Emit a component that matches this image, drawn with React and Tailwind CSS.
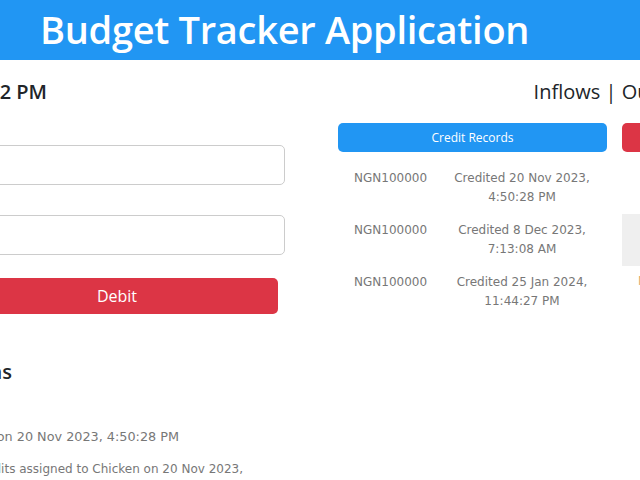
const credits = [
  { amount: 'NGN100000', date: 'Credited 20 Nov 2023, 4:50:28 PM' },
  { amount: 'NGN100000', date: 'Credited 8 Dec 2023, 7:13:08 AM' },
  { amount: 'NGN100000', date: 'Credited 25 Jan 2024, 11:44:27 PM' },
];

const debits = [
  { amount: '', date: '' },
  { amount: '', date: '', shaded: true },
  { amount: 'NGN5000', date: 'Debited 21 Nov 2023' },
];

function RecordRow({ amount, date, shaded, tone }) {
  return (
    <div
      className={`flex justify-between h-[52px] pl-[16px] py-[6px] text-[12px] leading-[19px] ${shaded ? 'bg-[#efefef]' : ''}`}
      style={{ fontFamily: '"DejaVu Sans", Verdana, sans-serif' }}
    >
      <span className={tone}>{amount}</span>
      <span className={`w-[170px] text-center ${tone}`}>{date}</span>
    </div>
  );
}

export default function App() {
  return (
    <div
      className="w-[640px] h-[480px] overflow-hidden bg-white text-[#212529]"
      style={{ fontFamily: '"Open Sans", "Noto Sans", sans-serif' }}
    >
      {/* Header */}
      <div className="h-[60px] bg-[#2196f3] flex items-center pl-[40px]">
        <h1 className="text-[38px] tracking-[-0.3px] font-semibold text-white leading-none whitespace-nowrap -mt-[2px]">
          Budget Tracker Application
        </h1>
      </div>

      <div className="flex -ml-[300px]">
        {/* Left column: wallet form + history */}
        <div className="w-[585px] shrink-0">
          <div className="w-[347px] flex justify-end mt-[18px]">
            <h2 className="text-[20px] leading-[28px] font-semibold whitespace-nowrap">
              Balance as at 25 Jan 2024, 11:46:02 PM
            </h2>
          </div>

          <input className="block w-full h-[40px] mt-[39px] border border-[#cccccc] rounded-[5px] outline-none" />
          <input className="block w-full h-[40px] mt-[30px] border border-[#cccccc] rounded-[5px] outline-none" />

          <button className="block ml-[256px] w-[322px] h-[36px] mt-[23px] bg-[#dc3545] rounded-[5px] text-white text-[16px]">
            Debit
          </button>

          <div className="w-[312px] flex justify-end mt-[44px]">
            <h2 className="text-[20px] leading-[28px] font-semibold whitespace-nowrap">
              Recent Transactions
            </h2>
          </div>

          <div
            className="text-[12px] leading-[18px] text-[#777777]"
            style={{ fontFamily: '"DejaVu Sans", Verdana, sans-serif' }}
          >
            <div className="w-[479px] flex justify-end mt-[42px]">
              <p className="whitespace-nowrap text-[12.8px]">Wallet credited with NGN100000 on 20 Nov 2023, 4:50:28 PM</p>
            </div>
            <div className="w-[543px] flex justify-end mt-[14px]">
              <p className="whitespace-nowrap">NGN5000 credits assigned to Chicken on 20 Nov 2023,</p>
            </div>
          </div>
        </div>

        {/* Right column: records */}
        <div className="w-[553px] shrink-0 ml-[53px]">
          <h2 className="text-[20px] leading-[28px] font-medium text-center pl-[10px] mt-[18px] whitespace-nowrap">
            Inflows | Outflows
          </h2>

          <div className="grid grid-cols-2 gap-[15px] mt-[17px]">
            <div>
              <button className="w-full h-[29px] bg-[#2196f3] rounded-[5px] text-white text-[12px]">
                Credit Records
              </button>
              <div className="mt-[11px] text-[#777777]">
                {credits.map((r, i) => (
                  <RecordRow key={i} {...r} />
                ))}
              </div>
            </div>
            <div>
              <button className="w-full h-[29px] bg-[#dc3545] rounded-[5px] text-white text-[12px]">
                Debit Records
              </button>
              <div className="mt-[10px]">
                {debits.map((r, i) => (
                  <RecordRow key={i} {...r} tone="text-[#e0aa70]" />
                ))}
              </div>
            </div>
          </div>
        </div>
      </div>
    </div>
  );
}
